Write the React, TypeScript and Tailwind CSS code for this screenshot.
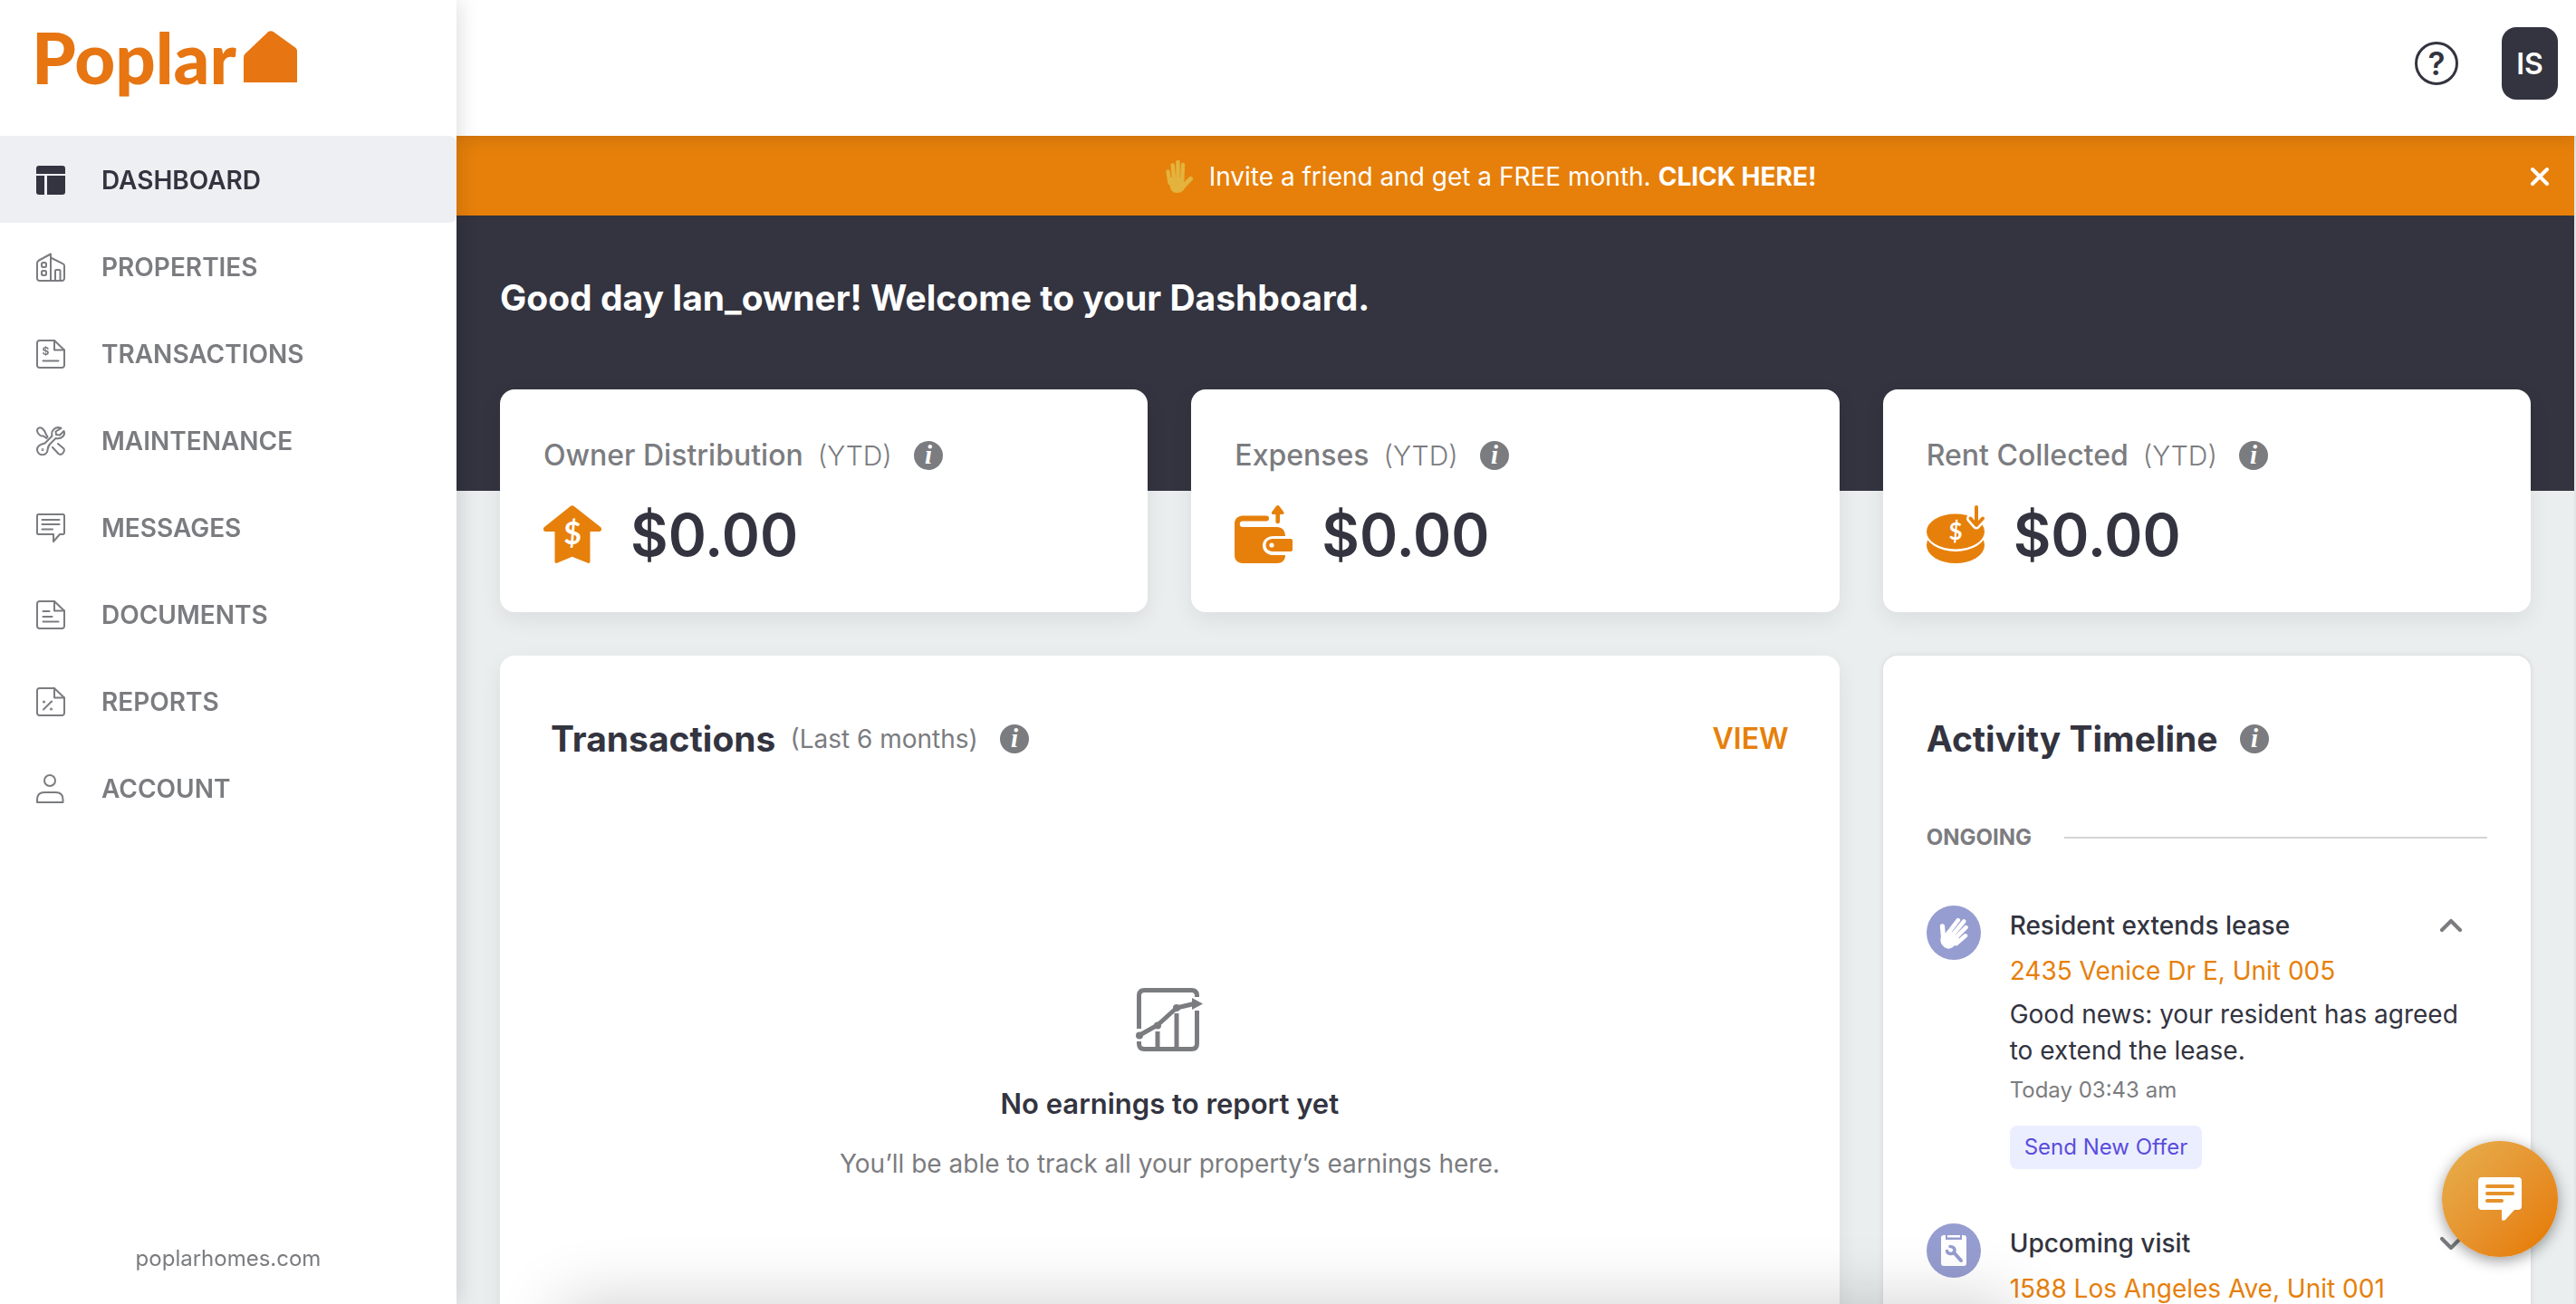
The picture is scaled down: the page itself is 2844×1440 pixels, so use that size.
import { useState, type ReactNode } from 'react';
import clsx from 'clsx';
import { ChevronDown, ChevronUp, X } from 'lucide-react';

function Svg({ box, className, children }: { box: string; className: string; children: ReactNode }) {
  return (
    <svg
      viewBox={box}
      className={className}
      fill="none"
      stroke="currentColor"
      strokeWidth="2"
      strokeLinecap="round"
      strokeLinejoin="round"
      aria-hidden="true"
    >
      {children}
    </svg>
  );
}

const pageOutline = (
  <>
    <path d="M3.500 1H20l11 10.500V28.500a2.500 2.500 0 0 1-2.500 2.500h-25A2.500 2.500 0 0 1 1 28.500v-25A2.500 2.500 0 0 1 3.500 1z" />
    <path d="M20 1v10.500h11" />
  </>
);

const navItems = [
  {
    label: 'DASHBOARD',
    icon: (
      <g fill="currentColor" stroke="none">
        <path d="M3 0h26a3 3 0 0 1 3 3v6H0V3a3 3 0 0 1 3-3z" />
        <path d="M0 11h9v21H3a3 3 0 0 1-3-3z" />
        <path d="M12 11h20v18a3 3 0 0 1-3 3H12z" />
      </g>
    ),
  },
  {
    label: 'PROPERTIES',
    icon: (
      <>
        <path d="M16 31V1.500L3 8.500C1.700 9.200 1 10 1 11.500V28.500A2.500 2.500 0 0 0 3.500 31h25a2.500 2.500 0 0 0 2.500-2.500V14.500c0-1.200-.6-1.900-1.800-2.400L16 5.500" />
        <rect x="6" y="11" width="5" height="5" rx="1.500" />
        <rect x="6" y="20" width="5" height="5" rx="1.500" />
        <path d="M21 30.500V20a1 1 0 0 1 1-1h3.500a1 1 0 0 1 1 1v10.500" />
      </>
    ),
  },
  {
    label: 'TRANSACTIONS',
    icon: (
      <>
        {pageOutline}
        <path d="M7.500 23.500h17" />
        <text x="6.500" y="17" fontSize="12" fontWeight="700" fill="currentColor" stroke="none">
          $
        </text>
      </>
    ),
  },
  {
    label: 'MAINTENANCE',
    icon: (
      <>
        <path d="M27.500 1.800C21.500-.5 16 4 17.500 10.500L9.500 18.500C4.500 19.500 1 22 1 25.500a5.800 5.800 0 0 0 11.600 0c0-3.500 1.400-5 3.400-7l5.500-5.500c6.500 1.300 11-3.500 9-8L26 9.500l-4-.5-.5-3.500z" />
        <path d="M12.500 11.500 10.500 8C9.500 4.500 6.500 1 4.200 1.200 2 1.400.5 3.500 1.200 5.500 2 9 5.500 11 8 10.500l3.500 2.500M18 23l6.500 7c3 2.500 7.500-1.500 6-5.500L24 19" />
        <circle cx="7" cy="25.500" r=".5" />
      </>
    ),
  },
  {
    label: 'MESSAGES',
    icon: (
      <>
        <path d="M2.500 1h27A1.500 1.500 0 0 1 31 2.500v19a1.500 1.500 0 0 1-1.500 1.500H26l-7 8v-8H2.500A1.500 1.500 0 0 1 1 21.500v-19A1.500 1.500 0 0 1 2.500 1z" />
        <path d="M6.500 7h19M6.500 12h19M6.500 17.500h11.500" />
      </>
    ),
  },
  {
    label: 'DOCUMENTS',
    icon: (
      <>
        {pageOutline}
        <path d="M7.500 12h7M7.500 18h10M7.500 23.500h17" />
      </>
    ),
  },
  {
    label: 'REPORTS',
    icon: (
      <>
        {pageOutline}
        <path d="M8 24.500 17 15.500" />
        <circle cx="8.500" cy="16" r=".6" />
        <circle cx="16.500" cy="24" r=".6" />
      </>
    ),
  },
  {
    label: 'ACCOUNT',
    icon: (
      <>
        <circle cx="15" cy="7" r="6" />
        <path d="M1 31v-3c0-5 3-8 8-8h12.500c5 0 8 3 8 8v3z" />
      </>
    ),
  },
];

function HandShape() {
  return (
    <>
      <path d="M2.500 12.500 4.500 25M7.700 5.500l1.500 17M13.500 2v18M19 5l-.8 17" strokeWidth="4.400" />
      <path d="M27.500 20.500 21 27" strokeWidth="5" />
      <path
        d="M3 19h17.300v5.500l2.700-1.500 3 0-5 8c-1.500 3-4.500 5-8.500 5-5 0-7.500-3-8-8.500z"
        fill="currentColor"
        stroke="none"
      />
    </>
  );
}

function InfoButton({ about }: { about: string }) {
  return (
    <button type="button" aria-label={'About ' + about} className="size-8 shrink-0 text-[#7b7c80]">
      <svg viewBox="0 0 32 32" className="size-8" aria-hidden="true">
        <circle cx="16" cy="16" r="16" fill="currentColor" />
        <text
          x="16"
          y="25"
          textAnchor="middle"
          fontFamily="Liberation Serif, serif"
          fontSize="29"
          fontStyle="italic"
          fontWeight="700"
          fill="#fff"
        >
          i
        </text>
      </svg>
    </button>
  );
}

const stats = [
  {
    label: 'Owner Distribution',
    icon: (
      <g fill="currentColor" stroke="none">
        <path d="M29.500 1.200a3.500 3.500 0 0 1 4.500 0L63 24c2 1.800 1 5-1.500 5H51.500v33c0 2-1.500 2.500-3 1.500L33.500 57.500a3 3 0 0 0-3.500 0L15.500 63.500c-1.500 1-3 .5-3-1.500V29H2.500C0 29-1 25.800 1 24z" />
        <text x="32" y="43" textAnchor="middle" fontFamily="Lato, sans-serif" fontSize="34" fontWeight="700" fill="#fff">
          $
        </text>
      </g>
    ),
  },
  {
    label: 'Expenses',
    icon: (
      <g fill="currentColor" stroke="none">
        <path d="M9 11.500h26a3 3 0 0 1 0 6H9a3.200 3.200 0 0 0 0 6.400h38c5 0 9 3.500 9 10H43c-7 0-12 4.500-12 10.500S36 55 43 55h13c0 6-4 9-9 9H9c-5.500 0-9-3.500-9-9V20.500c0-5.500 3.500-9 9-9z" />
        <path d="M43 37h19a2 2 0 0 1 2 2v10a2 2 0 0 1-2 2H43c-5 0-8.500-2.500-8.500-7s3.500-7 8.500-7z" />
        <circle cx="41" cy="44" r="2.600" fill="#fff" />
        <path d="M46 1c1-1.200 2.500-1.200 3.500 0l4.500 6c1 1.500.5 3-1 3h-3v8a2.300 2.300 0 0 1-4.600 0v-8h-3c-1.500 0-2-1.500-1-3z" />
      </g>
    ),
  },
  {
    label: 'Rent Collected',
    icon: (
      <>
        <ellipse cx="32" cy="44" rx="32" ry="20" fill="currentColor" stroke="none" />
        <ellipse cx="32" cy="29" rx="34" ry="22" fill="#fff" stroke="none" />
        <ellipse cx="32" cy="29" rx="32" ry="19.500" fill="currentColor" stroke="none" />
        <path d="M55 2v20M48.500 14.500l6.500 7.500 7-7.500" stroke="#fff" strokeWidth="9" />
        <path d="M55 2v19M48.500 14.500l6.500 7.500 7-7.500" strokeWidth="4" />
        <text
          x="32"
          y="38"
          textAnchor="middle"
          fontFamily="Lato, sans-serif"
          fontSize="26"
          fontWeight="700"
          fill="#fff"
          stroke="none"
        >
          $
        </text>
      </>
    ),
  },
];

function StatCard({ label, icon }: { label: string; icon: ReactNode }) {
  return (
    <section className="rounded-2xl bg-white p-12 shadow-[0_8px_24px_rgba(0,0,0,0.07)]">
      <div className="flex h-[50px] items-center text-[#7b7c80]">
        <h2 className="text-[32px] font-medium">{label}</h2>
        <span className="mr-6 ml-4 text-[30px] font-light">(YTD)</span>
        <InfoButton about={label} />
      </div>
      <div className="mt-6 flex items-center gap-8">
        <Svg box="0 0 64 64" className="size-16 overflow-visible text-[#e6800b]">
          {icon}
        </Svg>
        <p className="pt-0.5 text-[64px] leading-[74px] font-semibold">$0.00</p>
      </div>
    </section>
  );
}

interface TimelineItemProps {
  title: string;
  address: string;
  icon: ReactNode;
  open: boolean;
  onToggle: () => void;
  children?: ReactNode;
}

function TimelineItem({ title, address, icon, open, onToggle, children }: TimelineItemProps) {
  const Chevron = open ? ChevronUp : ChevronDown;

  return (
    <li className="flex gap-8">
      <span className="flex size-[60px] shrink-0 items-center justify-center rounded-full bg-[#969dd0] text-white">
        {icon}
      </span>
      <div className="min-w-0 flex-1 pt-0.5">
        <div className="flex items-center justify-between pr-5">
          <h3 className="text-[28px] leading-10 font-medium">{title}</h3>
          <button type="button" aria-label={'Toggle ' + title} aria-expanded={open} onClick={onToggle}>
            <Chevron className="size-10 text-[#7b7c80]" strokeWidth={2.500} />
          </button>
        </div>
        <a href="#property" className="mt-2.5 block text-[28px] leading-10 text-[#e6800b]">
          {address}
        </a>
        {open && children}
      </div>
    </li>
  );
}

export default function App() {
  const [showBanner, setShowBanner] = useState(true);
  const [openItem, setOpenItem] = useState('lease');

  const toggle = (id: string) => setOpenItem(openItem === id ? '' : id);

  return (
    <div className="flex h-screen overflow-hidden bg-[#eaeeef] font-[Inter,sans-serif] text-[#33343f]">
      <aside className="relative z-20 flex w-[504px] shrink-0 flex-col bg-white shadow-[0_0_24px_rgba(0,0,0,0.16)]">
        <a href="#home" className="flex h-[150px] items-start gap-2 pt-4 pl-[35px] text-[#e67512]">
          <span className="font-[Lato,sans-serif] text-[78px] leading-[94px] font-black">Poplar</span>
          <svg viewBox="0 0 59 57" className="mt-[18px] h-[57px] w-[59px]" fill="currentColor" aria-hidden="true">
            <path d="M27 1.200Q30 -.8 33 1.200L57 18.500Q59 20 59 22V57H0V29.500Q0 27 1.500 25.500z" />
          </svg>
        </a>
        <nav>
          {navItems.map((item, i) => (
            <a
              key={item.label}
              href={'#' + item.label.toLowerCase()}
              className={clsx(
                'flex h-24 items-center gap-10 rounded-r-lg pt-0.5 pl-10 text-[28px] font-semibold',
                i === 0 ? 'bg-[#eeeff2] text-[#33343f]' : 'text-[#7b7c80]'
              )}
            >
              <Svg box="0 0 32 32" className="size-8 shrink-0">
                {item.icon}
              </Svg>
              {item.label}
            </a>
          ))}
        </nav>
        <a href="#site" className="mt-auto pb-8 text-center text-2xl leading-9 text-[#7b7c80]">
          poplarhomes.com
        </a>
      </aside>

      <div className="flex min-w-0 flex-1 flex-col">
        <header className="relative z-10 flex h-[150px] shrink-0 items-center justify-end gap-12 bg-white pr-5 pb-2.5 shadow-[0_0_20px_rgba(0,0,0,0.16)]">
          <button type="button" aria-label="Help">
            <svg viewBox="0 0 48 48" className="size-12" aria-hidden="true">
              <circle cx="24" cy="24" r="22.500" fill="none" stroke="currentColor" strokeWidth="3" />
              <text x="24" y="36.500" textAnchor="middle" fontSize="35" fontWeight="600" fill="currentColor">
                ?
              </text>
            </svg>
          </button>
          <button
            type="button"
            className="h-20 w-[62px] rounded-2xl bg-[#33343f] pt-0.5 text-[32px] font-semibold text-white"
          >
            IS
          </button>
        </header>

        <main className="min-h-0 flex-1 overflow-hidden border-r-2 border-[#e2e4e6]">
          {showBanner && (
            <div className="flex h-[88px] items-center bg-[#e6800b] pt-0.5 pr-[22px] text-[28px] text-white">
              <p className="flex flex-1 items-center justify-center">
                <Svg box="0 0 30 36" className="mr-[18px] h-9 w-[30px] text-[#e3b33d]">
                  <HandShape />
                </Svg>
                Invite a friend and get a FREE month.
                <a href="#invite" className="ml-2 font-bold">
                  CLICK HERE!
                </a>
              </p>
              <button type="button" aria-label="Close banner" onClick={() => setShowBanner(false)}>
                <X className="size-8" strokeWidth={3} />
              </button>
            </div>
          )}

          <div className="h-[304px] bg-[#33343f] px-12 pt-16">
            <h1 className="text-[39px] leading-[54px] font-bold text-white">
              Good day Ian_owner! Welcome to your Dashboard.
            </h1>
          </div>

          <div className="-mt-28 grid grid-cols-3 gap-12 px-12 pb-12">
            {stats.map((stat) => (
              <StatCard key={stat.label} {...stat} />
            ))}

            <section className="col-span-2 rounded-2xl bg-white px-14 pt-[62px] pb-40 shadow-[0_8px_24px_rgba(0,0,0,0.07)]">
              <div className="flex h-[60px] items-center">
                <h2 className="text-[39px] font-bold">Transactions</h2>
                <span className="mr-6 ml-4 text-[28px] text-[#7b7c80]">(Last 6 months)</span>
                <InfoButton about="Transactions" />
                <a href="#transactions" className="ml-auto text-[32px] font-semibold text-[#e6800b]">
                  VIEW
                </a>
              </div>
              <div className="mt-[245px] flex flex-col items-center text-center">
                <Svg box="0 0 74 70" className="h-[70px] w-[74px] text-[#7b7c80]">
                  <g strokeWidth="5" strokeLinecap="butt">
                    <path d="M3.500 45V8.500q0-6 6-6h52q6 0 6 6V10M67.500 25v36.500q0 6-6 6h-52q-6 0-6-6V59" />
                    <path d="M24 48v18M45 28v38" />
                    <path d="M3.500 52.500 24 41 45 22l19-4.500" />
                  </g>
                  <g fill="currentColor" stroke="none">
                    <circle cx="4" cy="52.500" r="4" />
                    <circle cx="24" cy="41.500" r="4" />
                    <circle cx="45" cy="22" r="4" />
                    <path d="M62 11v13l12-6.500z" />
                  </g>
                </Svg>
                <p className="mt-[38px] text-[31px] leading-10 font-semibold">No earnings to report yet</p>
                <p className="mt-[26px] text-[28px] leading-10 text-[#7b7c80]">
                  You’ll be able to track all your property’s earnings here.
                </p>
              </div>
            </section>

            <section className="rounded-2xl bg-white px-12 pt-[62px] pb-16 shadow-[0_0_6px_rgba(0,0,0,0.1)]">
              <div className="flex h-[60px] items-center gap-6">
                <h2 className="text-[39px] font-bold">Activity Timeline</h2>
                <InfoButton about="Activity Timeline" />
              </div>
              <div className="mt-[61px] flex items-center gap-9 text-2xl leading-9 font-bold text-[#7b7c80]">
                ONGOING
                <hr className="flex-1 border-t-2 border-[#d3d4d6]" />
              </div>
              <ul className="mt-[57px] space-y-[60px]">
                <TimelineItem
                  title="Resident extends lease"
                  address="2435 Venice Dr E, Unit 005"
                  open={openItem === 'lease'}
                  onToggle={() => toggle('lease')}
                  icon={
                    <Svg box="0 0 40 40" className="size-10 overflow-visible">
                      <g transform="translate(20 20) rotate(40) scale(-1.05 1.05) translate(-14 -18)">
                        <HandShape />
                      </g>
                    </Svg>
                  }
                >
                  <p className="mt-2 text-[28px] leading-10">
                    Good news: your resident has agreed to extend the lease.
                  </p>
                  <p className="mt-2 text-2xl leading-8 text-[#7b7c80]">Today 03:43 am</p>
                  <button
                    type="button"
                    className="mt-[23px] block h-12 rounded-lg bg-[#ebeeff] px-4 text-2xl text-[#5a4ddc]"
                  >
                    Send New Offer
                  </button>
                </TimelineItem>
                <TimelineItem
                  title="Upcoming visit"
                  address="1588 Los Angeles Ave, Unit 001"
                  open={openItem === 'visit'}
                  onToggle={() => toggle('visit')}
                  icon={
                    <Svg box="0 0 28 34" className="h-[34px] w-7">
                      <path
                        d="M3 0h2v5h18V0h2a3 3 0 0 1 3 3v28a3 3 0 0 1-3 3H3a3 3 0 0 1-3-3V3a3 3 0 0 1 3-3z"
                        fill="currentColor"
                        stroke="none"
                      />
                      <path d="M7 0h14v2.500H7z" fill="currentColor" stroke="none" />
                      <path d="m14 19 8 9" stroke="#969dd0" strokeWidth="4" />
                      <path d="M10 12.500c4 0 6 3 4.500 6-2 3-7 2.500-8-1" stroke="#969dd0" strokeWidth="3.500" />
                    </Svg>
                  }
                />
              </ul>
            </section>
          </div>
        </main>
      </div>

      <div className="pointer-events-none fixed inset-x-[620px] top-full z-10 h-20 shadow-[0_0_76px_rgba(0,0,0,0.2)]" />

      <button
        type="button"
        aria-label="Open chat"
        className="fixed right-5 bottom-[52px] z-30 flex size-32 items-center justify-center rounded-full bg-linear-to-br from-[#e6a845] from-15% to-[#e6800b] to-85% text-white shadow-[0_4px_16px_rgba(0,0,0,0.4)]"
      >
        <Svg box="0 0 48 48" className="size-12">
          <path
            d="M4 0h40a4 4 0 0 1 4 4v28a4 4 0 0 1-4 4h-4L30 47c-1.500 1.500-4 1-4-1V36H4a4 4 0 0 1-4-4V4a4 4 0 0 1 4-4z"
            fill="currentColor"
            stroke="none"
          />
          <path d="M10 10h28M10 18h28M10 26h16" stroke="#e6922a" strokeWidth="4" />
        </Svg>
      </button>
    </div>
  );
}
